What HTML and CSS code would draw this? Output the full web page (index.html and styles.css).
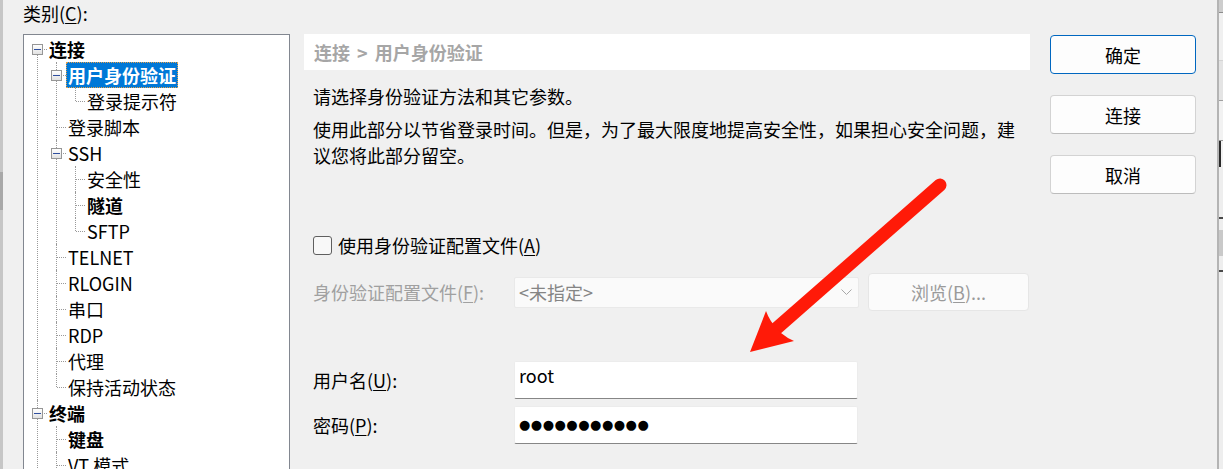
FILE: index.html
```html
<!DOCTYPE html>
<html lang="zh-CN">
<head>
<meta charset="utf-8">
<title>会话属性</title>
<link rel="stylesheet" href="styles.css">
</head>
<body>
<div class="screen">
  <div class="edge-left"><span class="edge-thumb"></span></div>

  <div class="dialog">
    <div class="cat-col">
      <div class="cat-label">类别(<u>C</u>):</div>
      <div class="tree-box">
        <ul class="tree">
          <li>
            <div class="row"><span class="exp"></span><span class="lbl bold">连接</span></div>
            <ul>
              <li>
                <div class="row"><span class="exp"></span><span class="lbl bold sel">用户身份验证</span></div>
                <ul>
                  <li><div class="row"><span class="lbl">登录提示符</span></div></li>
                </ul>
              </li>
              <li><div class="row"><span class="lbl">登录脚本</span></div></li>
              <li>
                <div class="row"><span class="exp"></span><span class="lbl">SSH</span></div>
                <ul>
                  <li><div class="row"><span class="lbl">安全性</span></div></li>
                  <li><div class="row"><span class="lbl bold">隧道</span></div></li>
                  <li><div class="row"><span class="lbl">SFTP</span></div></li>
                </ul>
              </li>
              <li><div class="row"><span class="lbl">TELNET</span></div></li>
              <li><div class="row"><span class="lbl">RLOGIN</span></div></li>
              <li><div class="row"><span class="lbl">串口</span></div></li>
              <li><div class="row"><span class="lbl">RDP</span></div></li>
              <li><div class="row"><span class="lbl">代理</span></div></li>
              <li><div class="row"><span class="lbl">保持活动状态</span></div></li>
            </ul>
          </li>
          <li>
            <div class="row"><span class="exp"></span><span class="lbl bold">终端</span></div>
            <ul>
              <li><div class="row"><span class="lbl bold">键盘</span></div></li>
              <li><div class="row"><span class="lbl">VT 模式</span></div></li>
            </ul>
          </li>
        </ul>
      </div>
    </div>

    <div class="panel">
      <div class="crumb">连接 &gt; 用户身份验证</div>
      <p class="desc">请选择身份验证方法和其它参数。</p>
      <p class="desc2">使用此部分以节省登录时间。但是，为了最大限度地提高安全性，如果担心安全问题，建议您将此部分留空。</p>

      <label class="check-row"><span class="checkbox"></span><span>使用身份验证配置文件(<u>A</u>)</span></label>

      <div class="field-row profile-row">
        <span class="field-label disabled">身份验证配置文件(<u>F</u>):</span>
        <div class="combo">
          <span class="combo-text">&lt;未指定&gt;</span>
          <svg class="chev" width="11" height="7" viewBox="0 0 11 7"><polyline points="0.5,0.5 5.5,5.5 10.5,0.5" fill="none" stroke="#a8a8a8" stroke-width="1"/></svg>
        </div>
        <div class="browse">浏览(<u>B</u>)...</div>
      </div>

      <div class="field-row user-row">
        <span class="field-label">用户名(<u>U</u>):</span>
        <div class="input"><span>root</span></div>
      </div>
      <div class="field-row pass-row">
        <span class="field-label">密码(<u>P</u>):</span>
        <div class="input pass"><span class="dots">●●●●●●●●●●●</span></div>
      </div>
    </div>

    <div class="buttons">
      <div class="btn primary">确定</div>
      <div class="btn">连接</div>
      <div class="btn">取消</div>
    </div>
  </div>

  <div class="edge-right">
    <span class="edge-line"></span>
    <span class="edge-bg">
      <span class="eb eb-top"></span>
      <span class="eb eb-light"></span>
      <span class="eb eb-band"></span>
      <span class="eb eb-light2"></span>
      <span class="eb eb-dark"></span>
      <span class="eb eb-light3"></span>
      <span class="eb eb-dash"></span>
      <span class="eb eb-band2"></span>
      <span class="eb eb-dash"></span>
    </span>
  </div>

  <svg class="arrow" width="1223" height="469" viewBox="0 0 1223 469">
    <line x1="940" y1="185" x2="769" y2="335" stroke="#ff1a08" stroke-width="13" stroke-linecap="round"/>
    <path d="M750 352 L766 311 Q770 322 777 328 L781 333 Q787 338 794 341 Z" fill="#ff1a08"/>
  </svg>
</div>
</body>
</html>
```

FILE: styles.css
```css
* { box-sizing: border-box; }
html, body { margin: 0; padding: 0; }
body {
  width: 1223px;
  height: 469px;
  overflow: hidden;
  background: #f0f0f0;
  font-family: "Noto Sans CJK SC", "Noto Sans", sans-serif;
  font-size: 18px;
  color: #000;
}
u { text-decoration: underline; text-underline-offset: 2px; }

.screen { position: relative; display: flex; width: 1223px; height: 469px; }

/* left edge of the window behind */
.edge-left { width: 3px; background: #c6c6c6; padding-top: 172px; display: flex; flex-direction: column; }
.edge-thumb { display: block; height: 38px; background: #a8a8a8; }

.dialog { flex: 1; display: flex; padding-left: 20px; }

/* category tree */
.cat-col { width: 267px; display: flex; flex-direction: column; }
.cat-label { height: 26px; line-height: 26px; margin-bottom: 8px; }
.tree-box {
  flex: 1;
  background: #fff;
  border: 1px solid #828790;
  border-bottom: none;
  padding-top: 1px;
  overflow: hidden;
}
.tree, .tree ul { list-style: none; margin: 0; padding: 0; }
.tree ul { padding-left: 19px; }
.tree li { position: relative; }
.tree li::before {
  content: "";
  position: absolute;
  left: 13px; top: 0; bottom: 0;
  border-left: 1px dotted #9a9a9a;
}
.tree li:last-child::before { bottom: -30px; height: auto; }
.tree ul li:last-child::before { bottom: auto; height: 13px; }
.tree > li:first-child::before { top: 13px; }
.tree > li:last-child > ul > li:last-child::before { bottom: -30px; height: auto; }
.tree li::after {
  content: "";
  position: absolute;
  left: 14px; top: 13px;
  width: 9px;
  border-top: 1px dotted #9a9a9a;
}
.row { position: relative; height: 26px; padding-left: 23px; display: flex; white-space: nowrap; }
.exp {
  position: absolute;
  left: 8px; top: 8px;
  width: 11px; height: 11px;
  border: 1px solid #969696;
  background: linear-gradient(#ffffff, #e2e2e2);
  z-index: 1;
}
.exp::after {
  content: "";
  position: absolute;
  left: 1px; top: 4px;
  width: 7px; height: 1px;
  background: #2f4f9f;
}
.lbl {
  display: block;
  height: 26px;
  line-height: 24px;
  padding: 0 1px;
  border: 1px solid transparent;
}
.bold { font-weight: bold; }
.sel { background: #0078d7; color: #fff; border: 1px dotted #e7a14a; }

/* right panel */
.panel { width: 726px; margin-left: 14px; padding-top: 34px; display: flex; flex-direction: column; }
.crumb {
  height: 36px;
  line-height: 36px;
  background: #fff;
  padding-left: 10px;
  font-weight: bold;
  color: #a6a6a6;
  word-spacing: 3px;
}
.desc { margin: 13px 0 0; padding-left: 9px; line-height: 26px; }
.desc2 { margin: 7px 0 0; padding: 0 6px 0 9px; line-height: 26px; }

.check-row { margin-top: 64px; height: 26px; display: flex; align-items: center; padding-left: 9px; gap: 6px; }
.checkbox {
  width: 19px; height: 19px;
  border: 1px solid #5f5f5f;
  border-radius: 3px;
  background: #f8f8f8;
}

.field-row { display: flex; align-items: center; padding-left: 9px; height: 38px; }
.field-label { width: 201px; flex: none; }
.disabled { color: #a0a0a0; }
.profile-row { margin-top: 15px; }
.combo {
  width: 345px; height: 31px;
  background: #fafafa;
  border: 1px solid #e9e9e9;
  border-radius: 2px;
  display: flex; align-items: center; justify-content: space-between;
  padding: 0 6px 0 4px;
  color: #858585;
}
.chev { display: block; }
.browse {
  width: 161px; height: 38px;
  margin-left: 9px;
  background: #fbfbfb;
  border: 1px solid #e6e6e6;
  border-radius: 4px;
  display: flex; align-items: center; justify-content: center;
  color: #9a9a9a;
}
.user-row { margin-top: 50px; }
.pass-row { margin-top: 7px; }
.input {
  width: 344px; height: 38px;
  background: #fff;
  border: 1px solid #ececec;
  border-bottom: 1px solid #868686;
  border-radius: 2px;
  padding: 0 0 0 4px;
  line-height: 26px;
}
.pass { padding-top: 1px; }
.dots { font-family: "DejaVu Sans", sans-serif; font-size: 13px; letter-spacing: 0.5px; }

/* buttons */
.buttons { width: 146px; margin-left: 20px; padding-top: 35px; display: flex; flex-direction: column; gap: 21px; }
.btn {
  height: 39px;
  background: #fdfdfd;
  border: 1px solid #d3d3d3;
  border-bottom-color: #bcbcbc;
  border-radius: 4px;
  display: flex; align-items: center; justify-content: center;
}
.btn.primary { border-color: #0067c0; }

/* right edge: window behind */
.edge-right { width: 6px; display: flex; }
.edge-line { width: 2px; background: #b4b4b4; }
.edge-bg { flex: 1; display: flex; flex-direction: column; background: #eeeeee; }
.eb { display: block; }
.eb-top { height: 13px; background: #cdcdcd; border-bottom: 1px solid #8c8c8c; }
.eb-light { height: 48px; background: #f0f0f0; border-bottom: 1px solid #d4d4d4; }
.eb-band { height: 40px; background: #e4e4e4; border-bottom: 1px solid #a0a0a0; }
.eb-light2 { height: 40px; background: #f2f2f2; border-bottom: 1px solid #9a9a9a; }
.eb-dark { height: 26px; background: #f2f2f2; border-left: 2px solid #2a2a2a; }
.eb-light3 { height: 50px; }
.eb-dash { height: 2px; background: #4a4a4a; margin-bottom: 25px; }
.eb-band2 { height: 26px; background: #c9c9c9; margin-top: -14px; margin-bottom: 14px; }

/* annotation arrow */
.arrow { position: absolute; left: 0; top: 0; pointer-events: none; }
```
